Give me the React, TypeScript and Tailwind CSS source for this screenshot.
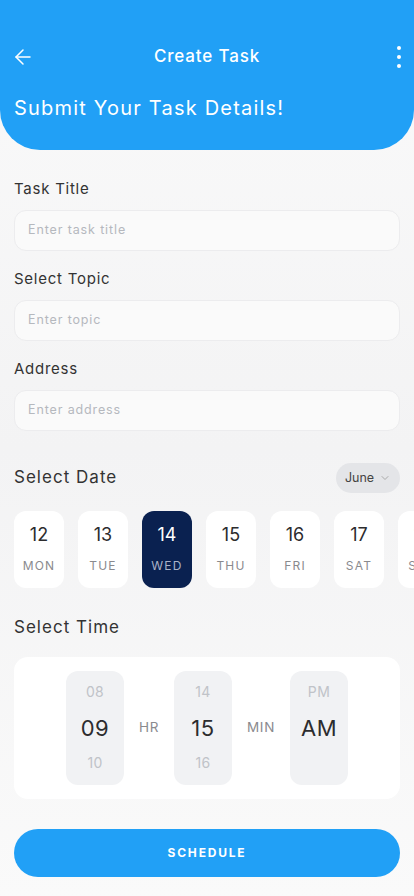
import { ArrowLeft, ChevronDown } from "lucide-react";

const days = [
  { n: "12", d: "MON" },
  { n: "13", d: "TUE" },
  { n: "14", d: "WED", active: true },
  { n: "15", d: "THU" },
  { n: "16", d: "FRI" },
  { n: "17", d: "SAT" },
  { n: "18", d: "SUN" },
];

function Field({ label, placeholder }: { label: string; placeholder: string }) {
  return (
    <div className="flex flex-col">
      <label className="text-[15px] leading-[20px] tracking-[0.05em] text-[#333]">{label}</label>
      <div className="mt-[11px] h-[41px] rounded-[12px] border border-[#ececee] bg-[#fafafa] flex items-center px-[13px]">
        <span className="text-[12.5px] tracking-[0.07em] text-[#b5b8be]">{placeholder}</span>
      </div>
    </div>
  );
}

function Wheel({ top, mid, bottom }: { top: string; mid: string; bottom?: string }) {
  return (
    <div className="w-[58px] h-[114px] rounded-[12px] bg-[#f1f2f4] flex flex-col items-center pt-[11px]">
      <span className="text-[14px] leading-[20px] text-[#c0c3c8] tracking-wide">{top}</span>
      <span className="mt-[11px] text-[22px] leading-[30px] text-[#2c2c2e] tracking-wide">{mid}</span>
      {bottom && <span className="mt-[10px] text-[14px] leading-[20px] text-[#c0c3c8] tracking-wide">{bottom}</span>}
    </div>
  );
}

export default function App() {
  return (
    <div className="w-[414px] h-[896px] overflow-hidden bg-gradient-to-b from-[#fafafa] via-[#f3f3f4] to-[#fafafa] font-['Inter',sans-serif]">
      <header className="h-[150px] bg-[#21a0f6] rounded-b-[40px] px-[14px] pt-[43px]">
        <div className="h-[28px] flex items-center justify-between">
          <ArrowLeft className="w-[24px] h-[24px] text-white -ml-[3px]" strokeWidth={1.5} />
          <h1 className="text-[17px] font-medium tracking-[0.05em] text-white">Create Task</h1>
          <div className="flex flex-col gap-[5px] w-[22px] items-end -mr-[1px]">
            <span className="w-[4px] h-[4px] rounded-full bg-white" />
            <span className="w-[4px] h-[4px] rounded-full bg-white" />
            <span className="w-[4px] h-[4px] rounded-full bg-white" />
          </div>
        </div>
        <p className="mt-[23px] text-[20px] leading-[28px] tracking-[0.06em] text-white">Submit Your Task Details!</p>
      </header>

      <main className="px-[14px] pt-[29px] flex flex-col gap-[18px]">
        <Field label="Task Title" placeholder="Enter task title" />
        <Field label="Select Topic" placeholder="Enter topic" />
        <Field label="Address" placeholder="Enter address" />
      </main>

      <section className="mt-[32px] px-[14px]">
        <div className="flex items-center justify-between">
          <h2 className="text-[17px] tracking-[0.06em] text-[#333]">Select Date</h2>
          <button className="h-[30px] w-[64px] rounded-full bg-[#e4e5e8] flex items-center justify-center gap-[5px] text-[12.5px] text-[#444]">
            June
            <ChevronDown className="w-[12px] h-[12px] text-[#aaa]" strokeWidth={2} />
          </button>
        </div>
        <div className="mt-[18px] flex gap-[14px] w-[500px]">
          {days.map((d) => (
            <div
              key={d.n}
              className={
                d.active
                  ? "w-[50px] h-[77px] shrink-0 rounded-[12px] bg-[#0a2150] flex flex-col items-center pt-[12px]"
                  : "w-[50px] h-[77px] shrink-0 rounded-[12px] bg-white flex flex-col items-center pt-[12px]"
              }
            >
              <span className={d.active ? "text-[18px] leading-[24px] text-white" : "text-[18px] leading-[24px] text-[#2c2c2e]"}>{d.n}</span>
              <span className={d.active ? "mt-[11px] text-[12px] leading-[16px] tracking-[0.1em] text-[#a9b3c8]" : "mt-[11px] text-[12px] leading-[16px] tracking-[0.1em] text-[#8a8a8e]"}>{d.d}</span>
            </div>
          ))}
        </div>
      </section>

      <section className="mt-[27px] px-[14px]">
        <h2 className="text-[17px] tracking-[0.06em] text-[#333]">Select Time</h2>
        <div className="mt-[16px] h-[142px] rounded-[14px] bg-white flex items-center justify-center gap-[15px]">
          <Wheel top="08" mid="09" bottom="10" />
          <span className="w-[20px] text-center text-[13.5px] tracking-[0.05em] text-[#8a8a8e]">HR</span>
          <Wheel top="14" mid="15" bottom="16" />
          <span className="w-[28px] text-center text-[13.5px] tracking-[0.05em] text-[#8a8a8e]">MIN</span>
          <Wheel top="PM" mid="AM" />
        </div>
      </section>

      <div className="mt-[30px] px-[14px]">
        <button className="w-full h-[48px] rounded-full bg-[#21a0f6] text-white text-[12px] font-bold tracking-[0.15em]">
          SCHEDULE
        </button>
      </div>
    </div>
  );
}
